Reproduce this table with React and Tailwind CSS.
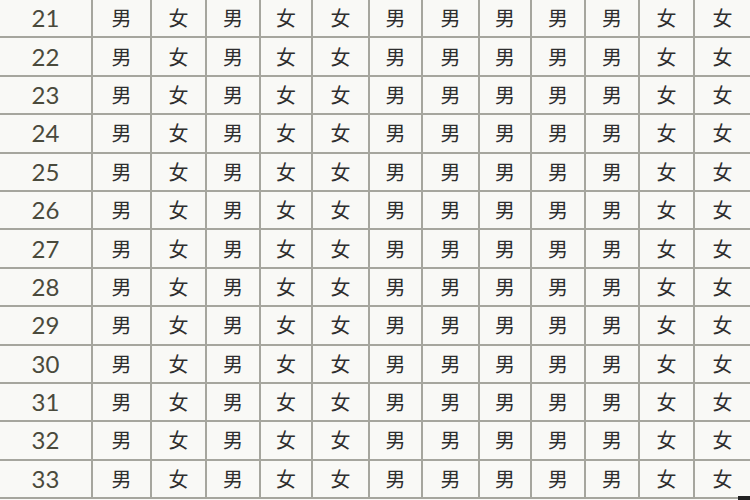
const widths = ["w-[93px]", "w-[59px]", "w-[55px]", "w-[54px]", "w-[52px]", "w-[57px]", "w-[53px]", "w-[57px]", "w-[52px]", "w-[54px]", "w-[54px]", "w-[55px]", "w-[55px]"];
const pattern = ["男", "女", "男", "女", "女", "男", "男", "男", "男", "男", "女", "女"];
const ages = [21, 22, 23, 24, 25, 26, 27, 28, 29, 30, 31, 32, 33];

export default function App() {
  return (
    <div className="relative w-[750px] h-[500px] overflow-hidden bg-[#f9f9f6]">
      {ages.map((age) => (
        <div key={age} className="flex h-[38.4px] border-b-2 border-[#a6a69e]">
          <div
            className={`${widths[0]} shrink-0 flex items-center justify-center border-r-2 border-[#a6a69e] text-[24px] text-[#4a4a3c]`}
            style={{ fontFamily: "Lato, 'Open Sans', sans-serif" }}
          >
            {age}
          </div>
          {pattern.map((g, i) => (
            <div
              key={i}
              className={`${widths[i + 1]} shrink-0 flex items-center justify-center ${i < pattern.length - 1 ? "border-r-2 border-[#a6a69e]" : ""} text-[20px] text-[#2e2e2e]`}
              style={{ fontFamily: "'Noto Sans CJK SC', sans-serif" }}
            >
              {g}
            </div>
          ))}
        </div>
      ))}
      <div className="absolute right-0 bottom-0 w-[12px] h-[4px] bg-[#222]" />
    </div>
  );
}
